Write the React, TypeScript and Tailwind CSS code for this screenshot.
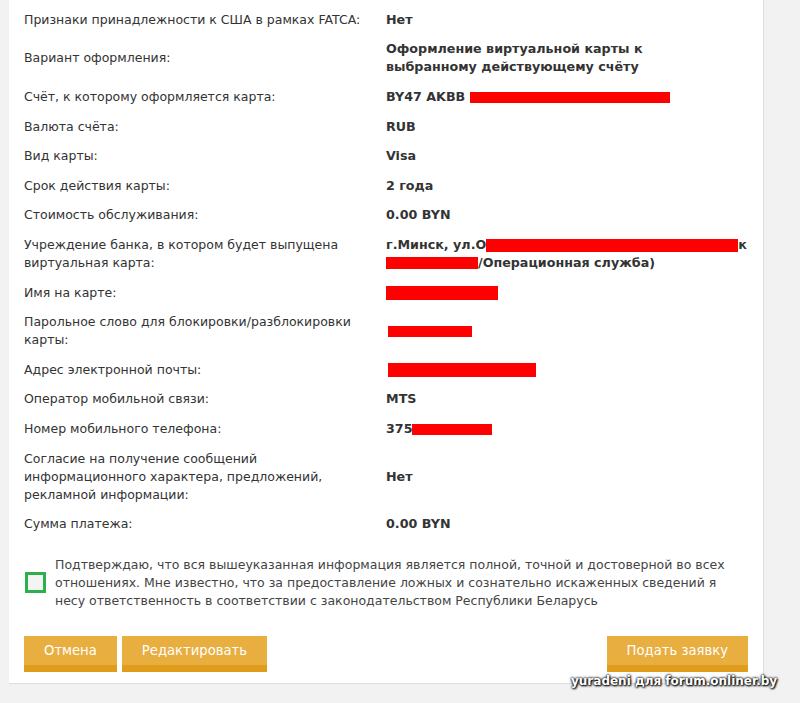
import React from 'react';

type Row = { label: React.ReactNode; value: React.ReactNode };

const Redact = ({ w, h = 12 }: { w: number; h?: number }) => (
  <span className="inline-block bg-[#ff0000] align-middle" style={{ width: w, height: h }} />
);

const rows: Row[] = [
  { label: 'Признаки принадлежности к США в рамках FATCA:', value: 'Нет' },
  { label: 'Вариант оформления:', value: 'Оформление виртуальной карты к выбранному действующему счёту' },
  {
    label: 'Счёт, к которому оформляется карта:',
    value: (
      <>
        BY47 AKBB <Redact w={200} h={11} />
      </>
    ),
  },
  { label: 'Валюта счёта:', value: 'RUB' },
  { label: 'Вид карты:', value: 'Visa' },
  { label: 'Срок действия карты:', value: '2 года' },
  { label: 'Стоимость обслуживания:', value: '0.00 BYN' },
  {
    label: 'Учреждение банка, в котором будет выпущена виртуальная карта:',
    value: (
      <>
        <span className="block whitespace-nowrap">
          г.Минск, ул.О<Redact w={252} h={13} />к
        </span>
        <span className="block whitespace-nowrap">
          <Redact w={92} h={12} />/Операционная служба)
        </span>
      </>
    ),
  },
  { label: 'Имя на карте:', value: <Redact w={112} h={14} /> },
  { label: 'Парольное слово для блокировки/разблокировки карты:', value: <span className="pl-[2px]"><Redact w={84} h={11} /></span> },
  { label: 'Адрес электронной почты:', value: <span className="pl-[2px]"><Redact w={148} h={14} /></span> },
  { label: 'Оператор мобильной связи:', value: 'MTS' },
  {
    label: 'Номер мобильного телефона:',
    value: (
      <>
        375<Redact w={80} h={11} />
      </>
    ),
  },
  { label: 'Согласие на получение сообщений информационного характера, предложений, рекламной информации:', value: 'Нет' },
  { label: 'Сумма платежа:', value: '0.00 BYN' },
];

const Button = ({ children }: { children: React.ReactNode }) => (
  <button className="h-[36px] border-b-[7px] border-[#e09d1c] bg-[#e8ae40] px-[20px] text-[13.2px] leading-[29px] text-white">
    {children}
  </button>
);

export default function App() {
  return (
    <div className="relative min-h-[703px] bg-[#f2f2f2] font-['DejaVu_Sans',Verdana,sans-serif] text-[12.5px] text-[#333]">
      <main className="ml-[9px] w-[755px] border-r border-b border-[#dddddd] bg-white pl-[15px] pr-[23px] pt-[5px] pb-[11px]">
        <section className="pr-[40px]">
          {rows.map((row, i) => (
            <div key={i} className="flex items-center py-[5.8px] leading-[18px]">
              <div className="w-[362px] shrink-0 pr-[14px]">{row.label}</div>
              <div className="flex-1 text-[12.7px] font-bold text-[#333]">{row.value}</div>
            </div>
          ))}
        </section>

        <label className="mt-[17px] flex items-center gap-[9px] pl-[1px] leading-[18px] text-[#444]">
          <span className="h-[21px] w-[21px] shrink-0 border-[3px] border-[#2bb04a] bg-[#f4f4f4]" />
          <span>
            Подтверждаю, что вся вышеуказанная информация является полной, точной и достоверной во всех отношениях. Мне
            известно, что за предоставление ложных и сознательно искаженных сведений я несу ответственность в соответствии с
            законодательством Республики Беларусь
          </span>
        </label>

        <div className="mt-[26px] flex items-center">
          <div className="flex gap-[5px]">
            <Button>Отмена</Button>
            <Button>Редактировать</Button>
          </div>
          <div className="ml-auto -mr-[8px]">
            <Button>Подать заявку</Button>
          </div>
        </div>
      </main>

      <div className="absolute left-[571px] top-[672px] font-['DejaVu_Sans',sans-serif] text-[12px] font-bold text-white [text-shadow:0_0_3px_#000,0_0_2px_#000,1px_1px_2px_#000]">
        yuradeni для forum.onliner.by
      </div>
    </div>
  );
}
